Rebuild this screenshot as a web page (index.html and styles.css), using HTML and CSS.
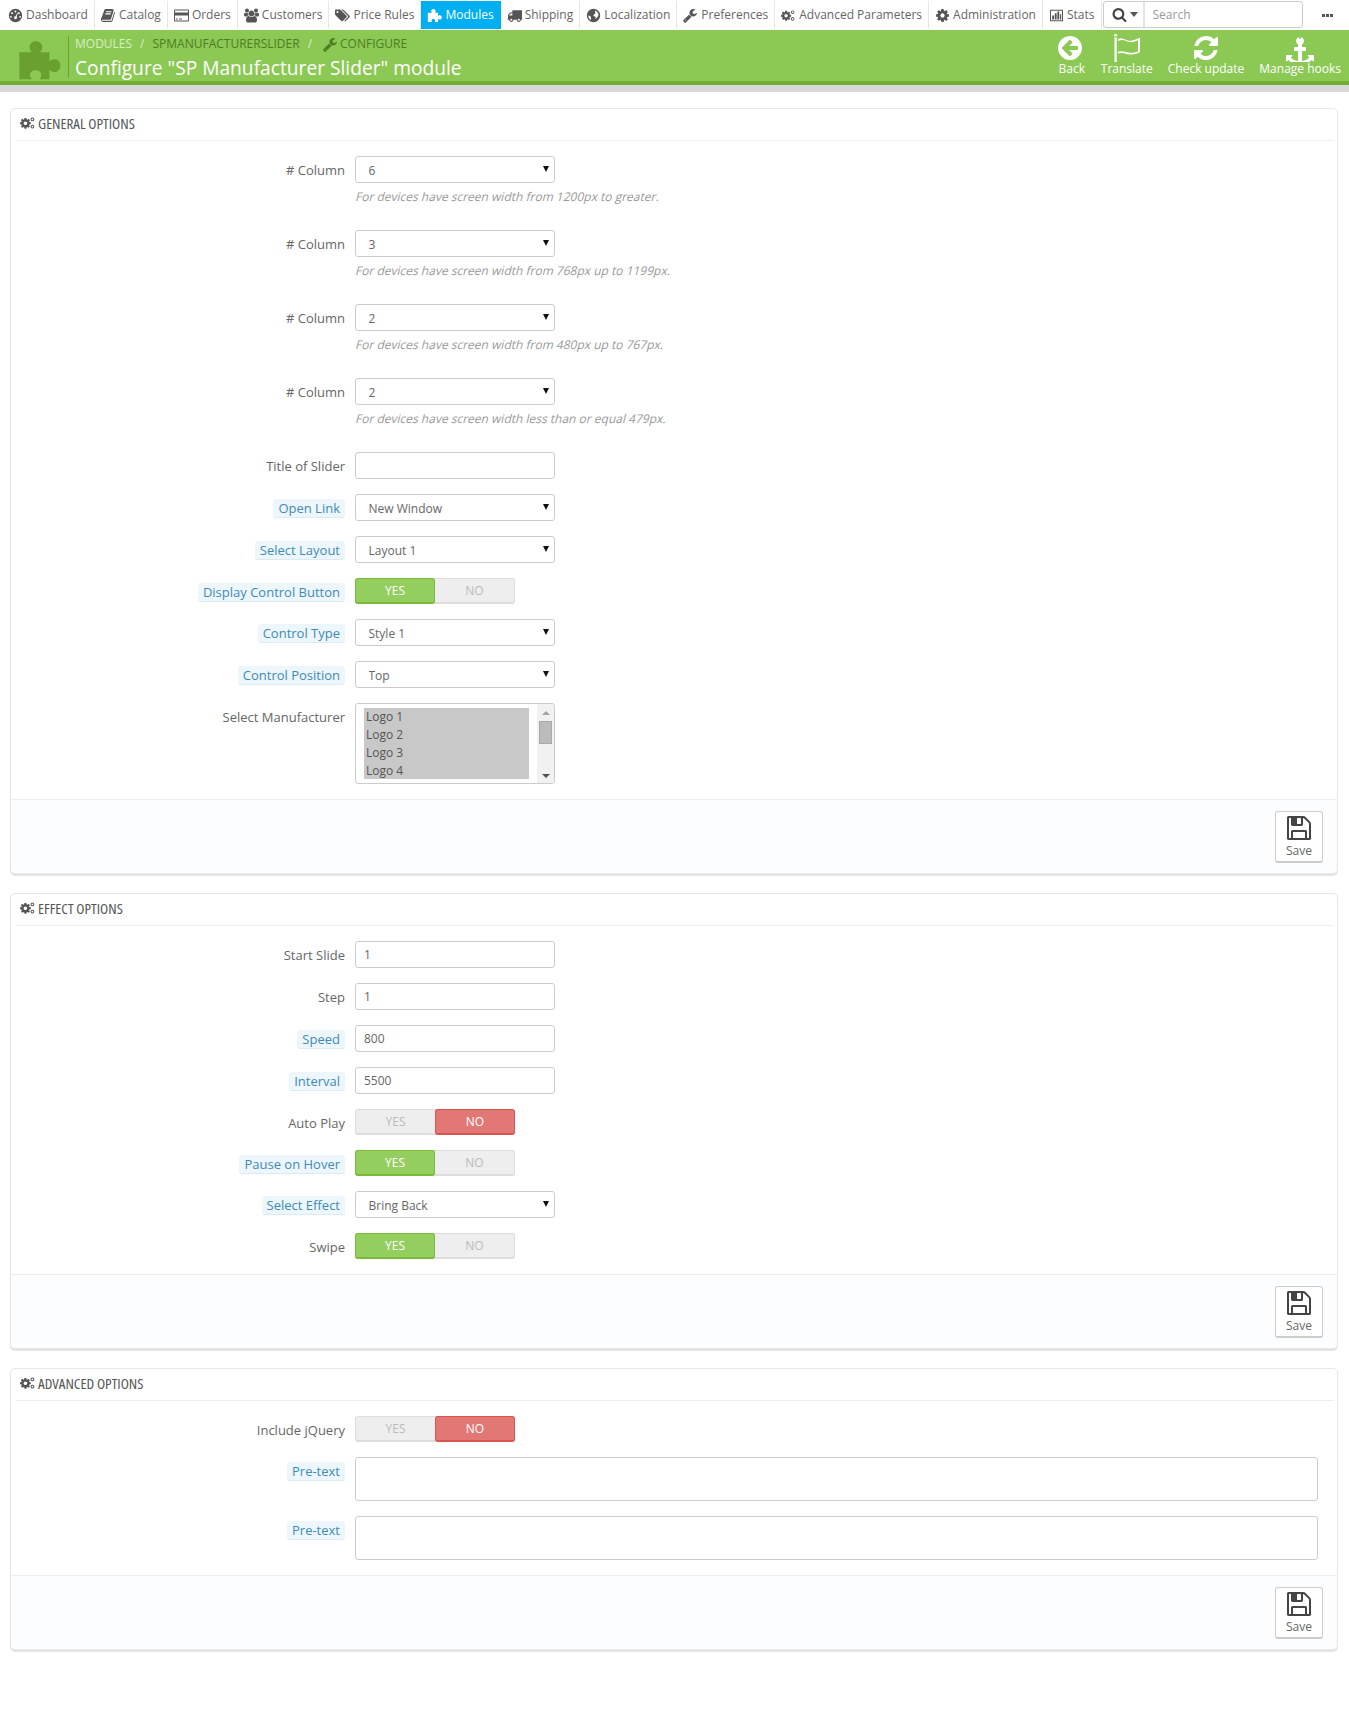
FILE: index.html
```html
<!DOCTYPE html>
<html lang="en">
<head>
<meta charset="utf-8">
<title>Configure SP Manufacturer Slider</title>
<link rel="stylesheet" href="styles.css">
</head>
<body>
<svg class="sprite" xmlns="http://www.w3.org/2000/svg">
  <symbol id="i-cog" viewBox="0 0 1792 1792"><path d="M1152 896q0-106-75-181t-181-75-181 75-75 181 75 181 181 75 181-75 75-181zm512-109v222q0 12-8 23t-20 13l-185 28q-19 54-39 91 35 50 107 138 10 12 10 25t-9 23q-27 37-99 108t-94 71q-12 0-26-9l-138-108q-44 23-91 38-16 136-29 186-7 28-36 28h-222q-14 0-24.500-8.500t-11.500-21.500l-28-184q-49-16-90-37l-141 107q-10 9-25 9-14 0-25-11-126-114-165-168-7-10-7-23 0-12 8-23 15-21 51-66.500t54-70.500q-27-50-41-99l-183-27q-13-2-21-12.500t-8-23.500v-222q0-12 8-23t19-13l186-28q14-46 39-92-40-57-107-138-10-12-10-24 0-10 9-23 26-36 98.500-107.500t94.500-71.500q13 0 26 10l138 107q44-23 91-38 16-136 29-186 7-28 36-28h222q14 0 24.500 8.500t11.500 21.500l28 184q49 16 90 37l142-107q9-9 24-9 13 0 25 10 129 119 165 170 7 8 7 22 0 12-8 23-15 21-51 66.500t-54 70.500q26 50 41 98l183 28q13 2 21 12.500t8 23.500z"/></symbol>
  <symbol id="i-cogs" viewBox="0 0 1920 1792"><use href="#i-cog" x="-100" y="180" width="1500" height="1500"/><path fill-rule="evenodd" d="M1260 470a230 230 0 1 0 460 0a230 230 0 1 0-460 0zM1380 470a110 110 0 1 1 220 0a110 110 0 1 1-220 0zM1260 1330a230 230 0 1 0 460 0a230 230 0 1 0-460 0zM1380 1330a110 110 0 1 1 220 0a110 110 0 1 1-220 0z"/></symbol>
  <symbol id="i-dash" viewBox="0 0 1792 1792"><path fill-rule="evenodd" d="M96 896a800 800 0 1 0 1600 0a800 800 0 1 0-1600 0zM240 1060a110 110 0 1 0 220 0a110 110 0 1 0-220 0zM370 620a110 110 0 1 0 220 0a110 110 0 1 0-220 0zM786 420a110 110 0 1 0 220 0a110 110 0 1 0-220 0zM1200 620a110 110 0 1 0 220 0a110 110 0 1 0-220 0zM1330 1060a110 110 0 1 0 220 0a110 110 0 1 0-220 0zM720 1160a176 176 0 1 0 352 0a176 176 0 1 0-352 0z"/><path d="M820 1160L1130 560l60 30L960 1190z" fill="#fff"/></symbol>
  <symbol id="i-book" viewBox="0 0 1792 1792"><path d="M1639 478q40 57 18 129l-275 906q-19 64-76.500 107.500t-122.500 43.500h-923q-77 0-148.500-53.500t-99.500-131.500q-24-67-2-127 0-4 3-27t4-37q1-8-3-21.500t-3-19.500q2-11 8-21t16.500-23.500 16.500-23.500q23-38 45-91.500t30-91.500q3-10 .500-30t-.500-28q3-11 17-28t17-23q21-36 42-92t25-90q1-9-2.500-32t.500-28q4-13 22-30.500t22-22.500q19-26 42.500-84.500t27.500-96.500q1-8-3-25.500t-2-26.500q2-8 9-18t18-23 17-21q8-12 16.500-30.500t15-35 16-36 19.500-32 26.500-23.500 36-11.500 47.500 5.500l-1 3q38-9 51-9h761q74 0 114 56t18 130l-274 906q-36 119-71.500 153.500t-128.500 34.500h-869q-27 0-38 15-11 16-1 43 24 70 144 70h923q29 0 56-15.500t35-41.500l300-987q7-22 5-57 38 15 59 43zm-1064 2q-4 13 2 22.500t20 9.500h608q13 0 25.500-9.500t16.500-22.500l21-64q4-13-2-22.500t-20-9.500h-608q-13 0-25.500 9.500t-16.500 22.500zm-83 256q-4 13 2 22.500t20 9.500h608q13 0 25.500-9.500t16.500-22.500l21-64q4-13-2-22.500t-20-9.500h-608q-13 0-25.500 9.500t-16.500 22.500z"/></symbol>
  <symbol id="i-card" viewBox="0 0 1920 1792"><path d="M1760 128q66 0 113 47t47 113v1216q0 66-47 113t-113 47h-1600q-66 0-113-47t-47-113v-1216q0-66 47-113t113-47h1600zm-1600 128q-13 0-22.500 9.500t-9.500 22.500v224h1664v-224q0-13-9.500-22.500t-22.500-9.500h-1600zm1600 1280q13 0 22.500-9.500t9.500-22.500v-608h-1664v608q0 13 9.500 22.500t22.500 9.500h1600zm-1504-128v-128h256v128h-256zm384 0v-128h384v128h-384z"/></symbol>
  <symbol id="i-users" viewBox="0 0 1920 1792"><path d="M593 896q-162 5-265 128h-134q-82 0-138-40.500t-56-118.500q0-353 124-353 6 0 43.500 21t97.500 42.500 119 21.500q67 0 133-23-5 37-5 66 0 139 81 256zm1071 637q0 120-73 189.500t-194 69.500h-874q-121 0-194-69.500t-73-189.500q0-53 3.500-103.500t14-109 26.500-108.500 43-97.500 62-81 85.500-53.500 111.500-20q10 0 43 21.500t73 48 107 48 135 21.500 135-21.500 107-48 73-48 43-21.500q61 0 111.500 20t85.500 53.500 62 81 43 97.500 26.500 108.500 14 109 3.500 103.500zm-1024-1277q0 106-75 181t-181 75-181-75-75-181 75-181 181-75 181 75 75 181zm704 384q0 159-112.500 271.500t-271.500 112.500-271.500-112.500-112.500-271.500 112.500-271.500 271.500-112.500 271.500 112.500 112.500 271.500zm576 225q0 78-56 118.500t-138 40.500h-134q-103-123-265-128 81-117 81-256 0-29-5-66 66 23 133 23 59 0 119-21.500t97.500-42.500 43.500-21q124 0 124 353zm-128-609q0 106-75 181t-181 75-181-75-75-181 75-181 181-75 181 75 75 181z"/></symbol>
  <symbol id="i-tags" viewBox="0 0 1920 1792"><path d="M448 448q0-53-37.500-90.500t-90.500-37.500-90.500 37.500-37.500 90.500 37.500 90.500 90.500 37.500 90.500-37.500 37.500-90.500zm1067 576q0 53-37 90l-491 492q-39 37-91 37-53 0-90-37l-715-716q-38-37-64.500-101t-26.500-117v-416q0-52 38-90t90-38h416q53 0 117 26.500t102 64.500l715 714q37 39 37 91zm384 0q0 53-37 90l-491 492q-39 37-91 37-36 0-59-14t-53-45l470-470q37-37 37-90 0-52-37-91l-715-714q-38-38-102-64.500t-117-26.500h224q53 0 117 26.500t102 64.500l715 714q37 39 37 91z"/></symbol>
  <symbol id="i-puzzle" viewBox="0 0 1792 1792"><path d="M96 576H600c-30-40-90-90-90-210 0-130 110-238 260-238s260 108 260 238c0 120-60 170-90 210h380v380c40-30 90-90 210-90 130 0 238 110 238 260s-108 260-238 260c-120 0-170-60-210-90v380h-400c30-50 70-90 70-170 0-110-110-190-230-190s-230 80-230 190c0 80 40 120 70 170H96z"/></symbol>
  <symbol id="i-truck" viewBox="0 0 1792 1792"><path d="M640 1408q0-52-38-90t-90-38-90 38-38 90 38 90 90 38 90-38 38-90zm-384-512h384v-256h-158q-13 0-22 9l-195 195q-9 9-9 22v30zm1280 512q0-52-38-90t-90-38-90 38-38 90 38 90 90 38 90-38 38-90zm256-1088v1024q0 15-4 26.500t-13.500 18.500-16.500 11.500-23.500 6-22.500 2-25.500 0-22.500-.500q0 106-75 181t-181 75-181-75-75-181h-384q0 106-75 181t-181 75-181-75-75-181h-64q-3 0-22.500.500t-25.500 0-22.500-2-23.500-6-16.500-11.500-13.500-18.500-4-26.500q0-26 19-45t45-19v-320q0-8-.500-35t0-38 2.500-34.500 6.500-37 14-30.500 22.500-30l198-198q19-19 50.500-32t58.500-13h160v-192q0-26 19-45t45-19h1024q26 0 45 19t19 45z"/></symbol>
  <symbol id="i-globe" viewBox="0 0 1792 1792"><path fill-rule="evenodd" d="M96 896a800 800 0 1 0 1600 0a800 800 0 1 0-1600 0zM1060 300c200 60 400 260 440 520-60 240-200 420-400 520 60-120 90-240 20-300-120-40-220-60-240-180 20-100 160-120 220-200 40-100-30-240-40-360zM260 860c120 60 320 130 340 260 0 120-40 200-20 340-180-120-300-360-320-600z"/></symbol>
  <symbol id="i-wrench" viewBox="0 0 1792 1792"><path d="M384 1472q0-26-19-45t-45-19-45 19-19 45 19 45 45 19 45-19 19-45zm644-420l-682 682q-37 37-90 37-52 0-91-37l-106-108q-38-36-38-90 0-53 38-91l681-681q39 98 114.500 173.500t173.500 114.500zm634-435q0 39-23 106-47 134-164.500 217.500t-258.500 83.500q-185 0-316.500-131.500t-131.500-316.500 131.500-316.500 316.500-131.500q58 0 121.500 16.500t107.500 46.500q16 11 16 28t-16 28l-293 169v224l193 107q5-3 79-48.500t135.500-81 70.500-35.500q15 0 23.500 10t8.500 25z"/></symbol>
  <symbol id="i-chart" viewBox="0 0 1792 1792"><path fill-rule="evenodd" d="M120 200H1672V1592H120zM240 320V1472H1552V320z"/><path d="M380 900H600V1360H380zM690 620H910V1360H690zM1000 420H1220V1360H1000zM1310 760H1450V1360H1310z"/></symbol>
  <symbol id="i-search" viewBox="0 0 1792 1792"><path d="M1216 832q0-185-131.500-316.500t-316.500-131.500-316.500 131.500-131.500 316.500 131.500 316.500 316.500 131.500 316.500-131.500 131.500-316.500zm512 832q0 52-38 90t-90 38q-54 0-90-38l-343-342q-179 124-399 124-143 0-273.500-55.500t-225-150-150-225-55.500-273.500 55.500-273.500 150-225 225-150 273.500-55.500 273.500 55.500 225 150 150 225 55.500 273.500q0 220-124 399l343 343q37 37 37 90z"/></symbol>
  <symbol id="i-back" viewBox="0 0 1792 1792"><path d="M1280 960v-128q0-26-19-45t-45-19h-502l189-189q19-19 19-45t-19-45l-91-91q-18-18-45-18t-45 18l-362 362-91 91q-18 18-18 45t18 45l91 91 362 362q18 18 45 18t45-18l91-91q18-18 18-45t-18-45l-189-189h502q26 0 45-19t19-45zm256-64q0 209-103 385.500t-279.500 279.500-385.500 103-385.500-103-279.500-279.500-103-385.500 103-385.500 279.500-279.500 385.500-103 385.500 103 279.500 279.500 103 385.500z"/></symbol>
  <symbol id="i-flag" viewBox="0 0 28 28"><path d="M1.500 2h2.200v26H1.500zM2.600 0a1.700 1.700 0 1 0 .01 0zM5 5c5-3 8 3 14 1.500 3-.7 5-1.500 8-2.700v14.300c-2 1.500-5 2.500-9 2.500-5 0-8-3-13-1v-1.800c5-1.700 8 1 13 1 3 0 5-.7 7-1.600V6.300c-2 .9-4 1.700-6 1.900-5.300.2-8-4.200-14-1.300z"/></symbol>
  <symbol id="i-refresh" viewBox="0 0 1792 1792"><path d="M1639 1056q0 5-1 7-64 268-268 434.500t-478 166.500q-146 0-282.500-55t-243.500-157l-129 129q-19 19-45 19t-45-19-19-45v-448q0-26 19-45t45-19h448q26 0 45 19t19 45-19 45l-137 137q71 66 161 102t187 36q134 0 250-65t186-179q11-17 53-117 8-23 30-23h192q13 0 22.500 9.500t9.500 22.500zm25-800v448q0 26-19 45t-45 19h-448q-26 0-45-19t-19-45 19-45l138-138q-148-137-349-137-134 0-250 65t-186 179q-11 17-53 117-8 23-30 23h-199q-13 0-22.500-9.500t-9.500-22.500v-7q65-268 270-434.500t480-166.500q146 0 284 55.500t245 156.500l130-129q19-19 45-19t45 19 19 45z"/></symbol>
  <symbol id="i-anchor" viewBox="0 0 1792 1792"><path d="M960 256q0-26-19-45t-45-19-45 19-19 45 19 45 45 19 45-19 19-45zm832 1120v352q0 22-20 30-8 2-12 2-12 0-23-9l-93-93q-119 143-318.500 226.500t-429.500 83.500-429.500-83.500-318.500-226.500l-93 93q-9 9-23 9-4 0-12-2-20-8-20-30v-352q0-14 9-23t23-9h352q22 0 30 20 8 19-7 35l-100 100q67 91 189.500 153.500t271.500 82.500v-647h-192q-26 0-45-19t-19-45v-128q0-26 19-45t45-19h192v-163q-58-34-93-92.500t-35-128.500q0-106 75-181t181-75 181 75 75 181q0 70-35 128.500t-93 92.500v163h192q26 0 45 19t19 45v128q0 26-19 45t-45 19h-192v647q149-20 271.500-82.500t189.500-153.500l-100-100q-15-16-7-35 8-20 30-20h352q14 0 23 9t9 23z"/></symbol>
  <symbol id="i-save" viewBox="0 0 1792 1792"><path d="M512 1536h768v-384h-768v384zm896 0h128v-896q0-14-10-38.500t-20-34.500l-281-281q-10-10-34-20t-39-10v416q0 40-28 68t-68 28h-576q-40 0-68-28t-28-68v-416h-128v1280h128v-416q0-40 28-68t68-28h832q40 0 68 28t28 68v416zm-384-928v-320q0-13-9.500-22.500t-22.500-9.500h-192q-13 0-22.500 9.500t-9.500 22.500v320q0 13 9.500 22.500t22.500 9.500h192q13 0 22.500-9.500t9.500-22.500zm640 32v928q0 40-28 68t-68 28h-1344q-40 0-68-28t-28-68v-1344q0-40 28-68t68-28h928q40 0 88 20t76 48l280 280q28 28 48 76t20 88z"/></symbol>
</svg>

<nav class="topnav">
  <a class="nav-item nav-first"><svg class="ic ic-15"><use href="#i-dash"/></svg>Dashboard</a>
  <a class="nav-item"><svg class="ic ic-15"><use href="#i-book"/></svg>Catalog</a>
  <a class="nav-item"><svg class="ic ic-15"><use href="#i-card"/></svg>Orders</a>
  <a class="nav-item"><svg class="ic ic-15"><use href="#i-users"/></svg>Customers</a>
  <a class="nav-item"><svg class="ic ic-15"><use href="#i-tags"/></svg>Price Rules</a>
  <a class="nav-item nav-active"><svg class="ic ic-15"><use href="#i-puzzle"/></svg>Modules</a>
  <a class="nav-item"><svg class="ic ic-15"><use href="#i-truck"/></svg>Shipping</a>
  <a class="nav-item"><svg class="ic ic-15"><use href="#i-globe"/></svg>Localization</a>
  <a class="nav-item"><svg class="ic ic-15"><use href="#i-wrench"/></svg>Preferences</a>
  <a class="nav-item"><svg class="ic ic-15"><use href="#i-cogs"/></svg>Advanced Parameters</a>
  <a class="nav-item"><svg class="ic ic-15"><use href="#i-cog"/></svg>Administration</a>
  <a class="nav-item"><svg class="ic ic-15"><use href="#i-chart"/></svg>Stats</a>
  <form class="search">
    <span class="search-btn"><svg class="ic ic-15"><use href="#i-search"/></svg><i class="search-caret"></i></span>
    <input class="search-input" type="text" placeholder="Search">
  </form>
  <span class="more"><i></i><i></i><i></i></span>
</nav>

<header class="pagehead">
  <svg class="head-puzzle"><use href="#i-puzzle"/></svg>
  <div class="head-titles">
    <div class="crumbs">
      <span class="crumb-first">Modules</span><span class="crumb-sep">/</span><span>spmanufacturerslider</span><span class="crumb-sep">/</span><span class="crumb-last"><svg class="ic ic-15"><use href="#i-wrench"/></svg>Configure</span>
    </div>
    <h1 class="page-title">Configure "SP Manufacturer Slider" module</h1>
  </div>
  <div class="actions">
    <a class="action"><svg class="action-ic"><use href="#i-back"/></svg>Back</a>
    <a class="action"><svg class="action-ic"><use href="#i-flag"/></svg>Translate</a>
    <a class="action"><svg class="action-ic"><use href="#i-refresh"/></svg>Check update</a>
    <a class="action"><svg class="action-ic"><use href="#i-anchor"/></svg>Manage hooks</a>
  </div>
</header>
<div class="head-strip"></div>

<main class="content">
  <section class="panel">
    <h2 class="panel-title"><svg class="title-ic"><use href="#i-cogs"/></svg><span class="panel-title-text">General Options</span></h2>
    <div class="panel-body">
      <div class="row"><label class="lbl"># Column</label><div><div class="sel"><select><option>6</option></select></div><p class="help"><span>For devices have screen width from 1200px to greater.</span></p></div></div>
      <div class="row"><label class="lbl"># Column</label><div><div class="sel"><select><option>3</option></select></div><p class="help"><span>For devices have screen width from 768px up to 1199px.</span></p></div></div>
      <div class="row"><label class="lbl"># Column</label><div><div class="sel"><select><option>2</option></select></div><p class="help"><span>For devices have screen width from 480px up to 767px.</span></p></div></div>
      <div class="row"><label class="lbl"># Column</label><div><div class="sel"><select><option>2</option></select></div><p class="help"><span>For devices have screen width less than or equal 479px.</span></p></div></div>
      <div class="row"><label class="lbl">Title of Slider</label><input class="txt" type="text"></div>
      <div class="row"><label class="lbl"><span class="tip">Open Link</span></label><div class="sel"><select><option>New Window</option></select></div></div>
      <div class="row"><label class="lbl"><span class="tip">Select Layout</span></label><div class="sel"><select><option>Layout 1</option></select></div></div>
      <div class="row"><label class="lbl"><span class="tip">Display Control Button</span></label><div class="toggle"><span class="yes on">YES</span><span>NO</span></div></div>
      <div class="row"><label class="lbl"><span class="tip">Control Type</span></label><div class="sel"><select><option>Style 1</option></select></div></div>
      <div class="row"><label class="lbl"><span class="tip">Control Position</span></label><div class="sel"><select><option>Top</option></select></div></div>
      <div class="row"><label class="lbl">Select Manufacturer</label>
        <div class="listbox">
          <ul class="list"><li>Logo 1</li><li>Logo 2</li><li>Logo 3</li><li>Logo 4</li></ul>
          <div class="sb"><i class="sb-up"></i><i class="sb-thumb"></i><i class="sb-down"></i></div>
        </div>
      </div>
    </div>
    <footer class="panel-foot"><button class="save" type="button"><svg class="save-ic"><use href="#i-save"/></svg>Save</button></footer>
  </section>

  <section class="panel">
    <h2 class="panel-title"><svg class="title-ic"><use href="#i-cogs"/></svg><span class="panel-title-text">Effect Options</span></h2>
    <div class="panel-body">
      <div class="row"><label class="lbl">Start Slide</label><input class="txt" type="text" value="1"></div>
      <div class="row"><label class="lbl">Step</label><input class="txt" type="text" value="1"></div>
      <div class="row"><label class="lbl"><span class="tip">Speed</span></label><input class="txt" type="text" value="800"></div>
      <div class="row"><label class="lbl"><span class="tip">Interval</span></label><input class="txt" type="text" value="5500"></div>
      <div class="row"><label class="lbl">Auto Play</label><div class="toggle"><span>YES</span><span class="no on">NO</span></div></div>
      <div class="row"><label class="lbl"><span class="tip">Pause on Hover</span></label><div class="toggle"><span class="yes on">YES</span><span>NO</span></div></div>
      <div class="row"><label class="lbl"><span class="tip">Select Effect</span></label><div class="sel"><select><option>Bring Back</option></select></div></div>
      <div class="row"><label class="lbl">Swipe</label><div class="toggle"><span class="yes on">YES</span><span>NO</span></div></div>
    </div>
    <footer class="panel-foot"><button class="save" type="button"><svg class="save-ic"><use href="#i-save"/></svg>Save</button></footer>
  </section>

  <section class="panel">
    <h2 class="panel-title"><svg class="title-ic"><use href="#i-cogs"/></svg><span class="panel-title-text">Advanced Options</span></h2>
    <div class="panel-body">
      <div class="row"><label class="lbl">Include jQuery</label><div class="toggle"><span>YES</span><span class="no on">NO</span></div></div>
      <div class="row"><label class="lbl"><span class="tip">Pre-text</span></label><textarea class="area"></textarea></div>
      <div class="row"><label class="lbl"><span class="tip">Pre-text</span></label><textarea class="area"></textarea></div>
    </div>
    <footer class="panel-foot"><button class="save" type="button"><svg class="save-ic"><use href="#i-save"/></svg>Save</button></footer>
  </section>
</main>
</body>
</html>
```
FILE: styles.css
```css
* { box-sizing: border-box; }
html, body { margin: 0; padding: 0; }
body { font-family: "Open Sans", "Liberation Sans", sans-serif; font-size: 12px; color: #666; background: #fff; min-height: 1729px; }
.sprite { display: none; }
svg { fill: currentColor; }
.ic { flex: none; display: block; }
.ic-15 { width: 15px; height: 15px; }

/* top navigation */
.topnav { display: flex; align-items: stretch; height: 30px; padding-top: 1px; padding-bottom: 1px; }
.nav-item { display: flex; align-items: center; gap: 3px; padding: 0 6px; border-right: 1px solid #e6e6e6; color: #666; white-space: nowrap; line-height: 18px; }
.nav-first { padding-left: 8px; }
.nav-item .ic { color: #555; }
.nav-active, .nav-active .ic { background: #00aff0; color: #fff; border-right-color: #00aff0; }
.search { display: flex; margin-left: 1px; height: 27px; width: 200px; border: 1px solid #ccc; border-radius: 3px; }
.search-btn { display: flex; align-items: center; gap: 3px; width: 41px; padding-left: 8px; color: #444; border-right: 2px solid #e4e4e4; }
.search-caret { width: 0; height: 0; border: 4px solid transparent; border-top: 5px solid #555; border-bottom: 0; }
.search-input { flex: 1; min-width: 0; border: 0; outline: 0; padding: 0 8px; font: inherit; background: transparent; }
.search-input::placeholder { color: #999; }
.more { display: flex; align-items: center; gap: 1px; margin-left: 19px; }
.more i { width: 3px; height: 3px; background: #555; }

/* page head */
.pagehead { display: flex; height: 55px; background: #8bc954; border-bottom: 4px solid #72ad35; padding: 4px 8px 0 20px; }
.head-puzzle { width: 44px; height: 44px; color: #69a030; margin: 4px 5px 0 -3px; flex: none; }
.head-titles { margin-top: 2px; height: 42px; border-left: 1px solid #6ca434; padding-left: 6px; margin-left: 2px; flex: 1; }
.crumbs { display: flex; align-items: center; height: 16px; text-transform: uppercase; color: #4f7c25; line-height: 16px; }
.crumb-first { color: #d8efc0; }
.crumb-sep { color: #d8efc0; margin: 0 8px; }
.crumb-last { display: flex; align-items: center; gap: 2px; margin-left: 3px; }
.page-title { margin: 3px 0 0; font-size: 19.2px; font-weight: 400; line-height: 26px; color: #fff; white-space: nowrap; }
.actions { display: flex; gap: 15px; }
.action { display: flex; flex-direction: column; align-items: center; color: #fff; line-height: 14px; white-space: nowrap; }
.action-ic { width: 28px; height: 28px; display: block; }
.head-strip { height: 7px; background: #d8d8d8; }

/* panels */
.content { padding: 16px 11px 0 10px; }
.panel { border: 1px solid #e6e6e6; border-radius: 5px; box-shadow: 0 2px 0 #e4e4e4; margin-bottom: 19px; background: #fff; overflow: hidden; }
.panel-title { display: flex; align-items: center; gap: 2px; height: 32px; margin: 0 3px 0 4px; padding: 0 0 4px 5px; border-bottom: 1px solid #eee; font-weight: 400; color: #555; }
.title-ic { width: 16px; height: 16px; flex: none; display: block; }
.panel-title-text { display: block; font-size: 15px; font-stretch: condensed; text-transform: uppercase; white-space: nowrap; }
.panel-body { padding: 15px 19px 0 0; }
.row { display: grid; grid-template-columns: 334px 1fr; column-gap: 10px; margin-bottom: 15px; align-items: start; }
.lbl { display: block; text-align: right; font-size: 13px; line-height: 18px; padding-top: 5px; color: #666; }
.tip { display: inline-block; padding: 0 5px; background: #edf6fb; border-bottom: 1px solid #d9ebf5; border-radius: 3px; color: #3f8bb5; height: 19px; }
.sel { position: relative; width: 200px; height: 27px; }
.sel select { width: 100%; height: 100%; appearance: none; -webkit-appearance: none; background: #fff; border: 1px solid #ccc; border-radius: 3px; padding: 1px 0 0 12.500px; font: inherit; color: #666; outline: 0; }
.sel::after { content: ""; position: absolute; right: 6px; top: 10px; border: 3px solid transparent; border-top: 6px solid #111; border-bottom: 0; }
.help { margin: 5px 0 9px; padding-left: 1px; line-height: 18px; color: #999; white-space: nowrap; }
.help span { display: inline-block; transform: skewX(-14deg); }
.txt { display: block; width: 200px; height: 27px; border: 1px solid #ccc; border-radius: 3px; padding: 0 8px; font: inherit; color: #666; outline: 0; }
.area { display: block; width: 100%; height: 44px; border: 1px solid #ccc; border-radius: 3px; resize: none; outline: 0; font: inherit; margin: 0; }
.toggle { display: flex; width: 160px; height: 26px; background: #eee; border: 1px solid #ddd; border-bottom-width: 2px; border-radius: 3px; }
.toggle span { flex: none; width: 79px; display: flex; align-items: center; justify-content: center; color: #bbb; }
.toggle .on { width: 80px; height: 26px; margin-top: -1px; color: #fff; border-radius: 3px; border: 1px solid; border-bottom-width: 2px; }
.toggle .yes { background: #93ce5e; border-color: #79bb39; margin-left: -1px; }
.toggle .no { background: #e17875; border-color: #d9534f; margin-right: -1px; }

.listbox { display: flex; width: 200px; height: 81px; border: 1px solid #ccc; border-radius: 3px; overflow: hidden; }
.list { flex: 1; list-style: none; margin: 0; padding: 4px 8px 0; height: 75px; overflow: hidden; }
.list li { height: 18px; line-height: 18px; padding-left: 2px; background: #c8c8c8; color: #555; }
.sb { width: 17px; background: #f1f1f1; display: flex; flex-direction: column; align-items: center; padding: 7px 0 5px; }
.sb-up { border: 4px solid transparent; border-bottom: 4px solid #a3a3a3; border-top: 0; }
.sb-thumb { width: 13px; height: 23px; margin-top: 6px; background: #bbb; border: 1px solid #a9a9a9; }
.sb-down { margin-top: auto; border: 4px solid transparent; border-top: 4px solid #505050; border-bottom: 0; }

.panel-foot { display: flex; justify-content: flex-end; height: 74px; padding: 11px 14px 0 0; background: #fcfdfe; border-top: 1px solid #eee; }
.save { display: flex; flex-direction: column; align-items: center; width: 48px; height: 52px; padding: 2px 0 0; background: #fff; border: 1px solid #ccc; border-bottom-width: 2px; border-radius: 3px; font: inherit; color: #666; line-height: 18px; }
.save-ic { width: 28px; height: 28px; color: #444; display: block; }
```
